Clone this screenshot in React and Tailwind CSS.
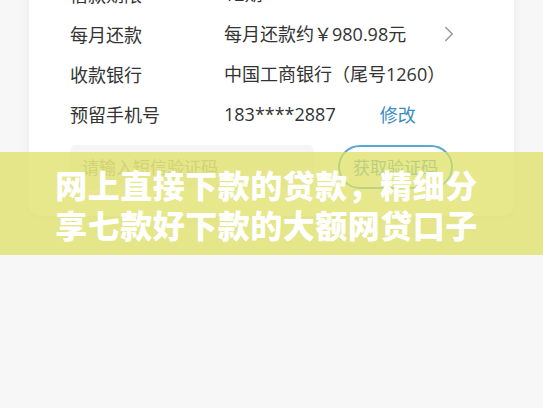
import { ChevronRight } from 'lucide-react';

const rows = [
  { label: '借款期限', value: '12期' },
  { label: '每月还款', value: '每月还款约￥980.98元', arrow: true },
  { label: '收款银行', value: '中国工商银行（尾号1260）' },
  { label: '预留手机号', value: '183****2887', edit: true },
];

export default function App() {
  return (
    <div
      className="relative w-[543px] h-[408px] overflow-hidden bg-[#f7f7f7]"
      style={{ fontFamily: '"Noto Sans CJK SC", "Noto Sans", sans-serif' }}
    >
      <div className="mx-[29px] -mt-[26px] bg-white rounded-b-xl shadow-[0_2px_10px_rgba(0,0,0,0.06)] pl-[41px] pr-[52px] pb-[27px]">
        {rows.map((r) => (
          <div key={r.label} className="flex items-center h-[40px] text-[18px] text-[#333]">
            <div className="w-[154px] shrink-0">{r.label}</div>
            <div className="flex-1 flex items-center">
              <span style={{ fontFamily: '"Open Sans", "Noto Sans CJK SC", sans-serif' }}>{r.value}</span>
              {r.edit && <span className="ml-[44px] text-[#3a8cc4]">修改</span>}
            </div>
            {r.arrow && <ChevronRight className="w-[26px] h-[26px] text-[#9a9a9a]" strokeWidth={1.4} />}
          </div>
        ))}
        <div className="flex items-center mt-[11px] gap-[24px]">
          <div className="w-[244px] h-[44px] bg-[#f5f5f5] rounded-md flex items-center px-[12px] text-[17px] text-[#aaa]">
            请输入短信验证码
          </div>
          <div className="w-[115px] h-[44px] rounded-full border-2 border-[#5aa7d6] flex items-center justify-center text-[17px] text-[#4d9bcf]">
            获取验证码
          </div>
        </div>
      </div>
      <div className="absolute left-0 right-0 top-[152px] h-[103px] bg-[rgba(222,224,100,0.75)] flex flex-col items-center justify-center text-white font-black text-[32px] leading-[40px] tracking-[0.5px] pr-[10px]">
        <div>网上直接下款的贷款，精细分</div>
        <div>享七款好下款的大额网贷口子</div>
      </div>
    </div>
  );
}
